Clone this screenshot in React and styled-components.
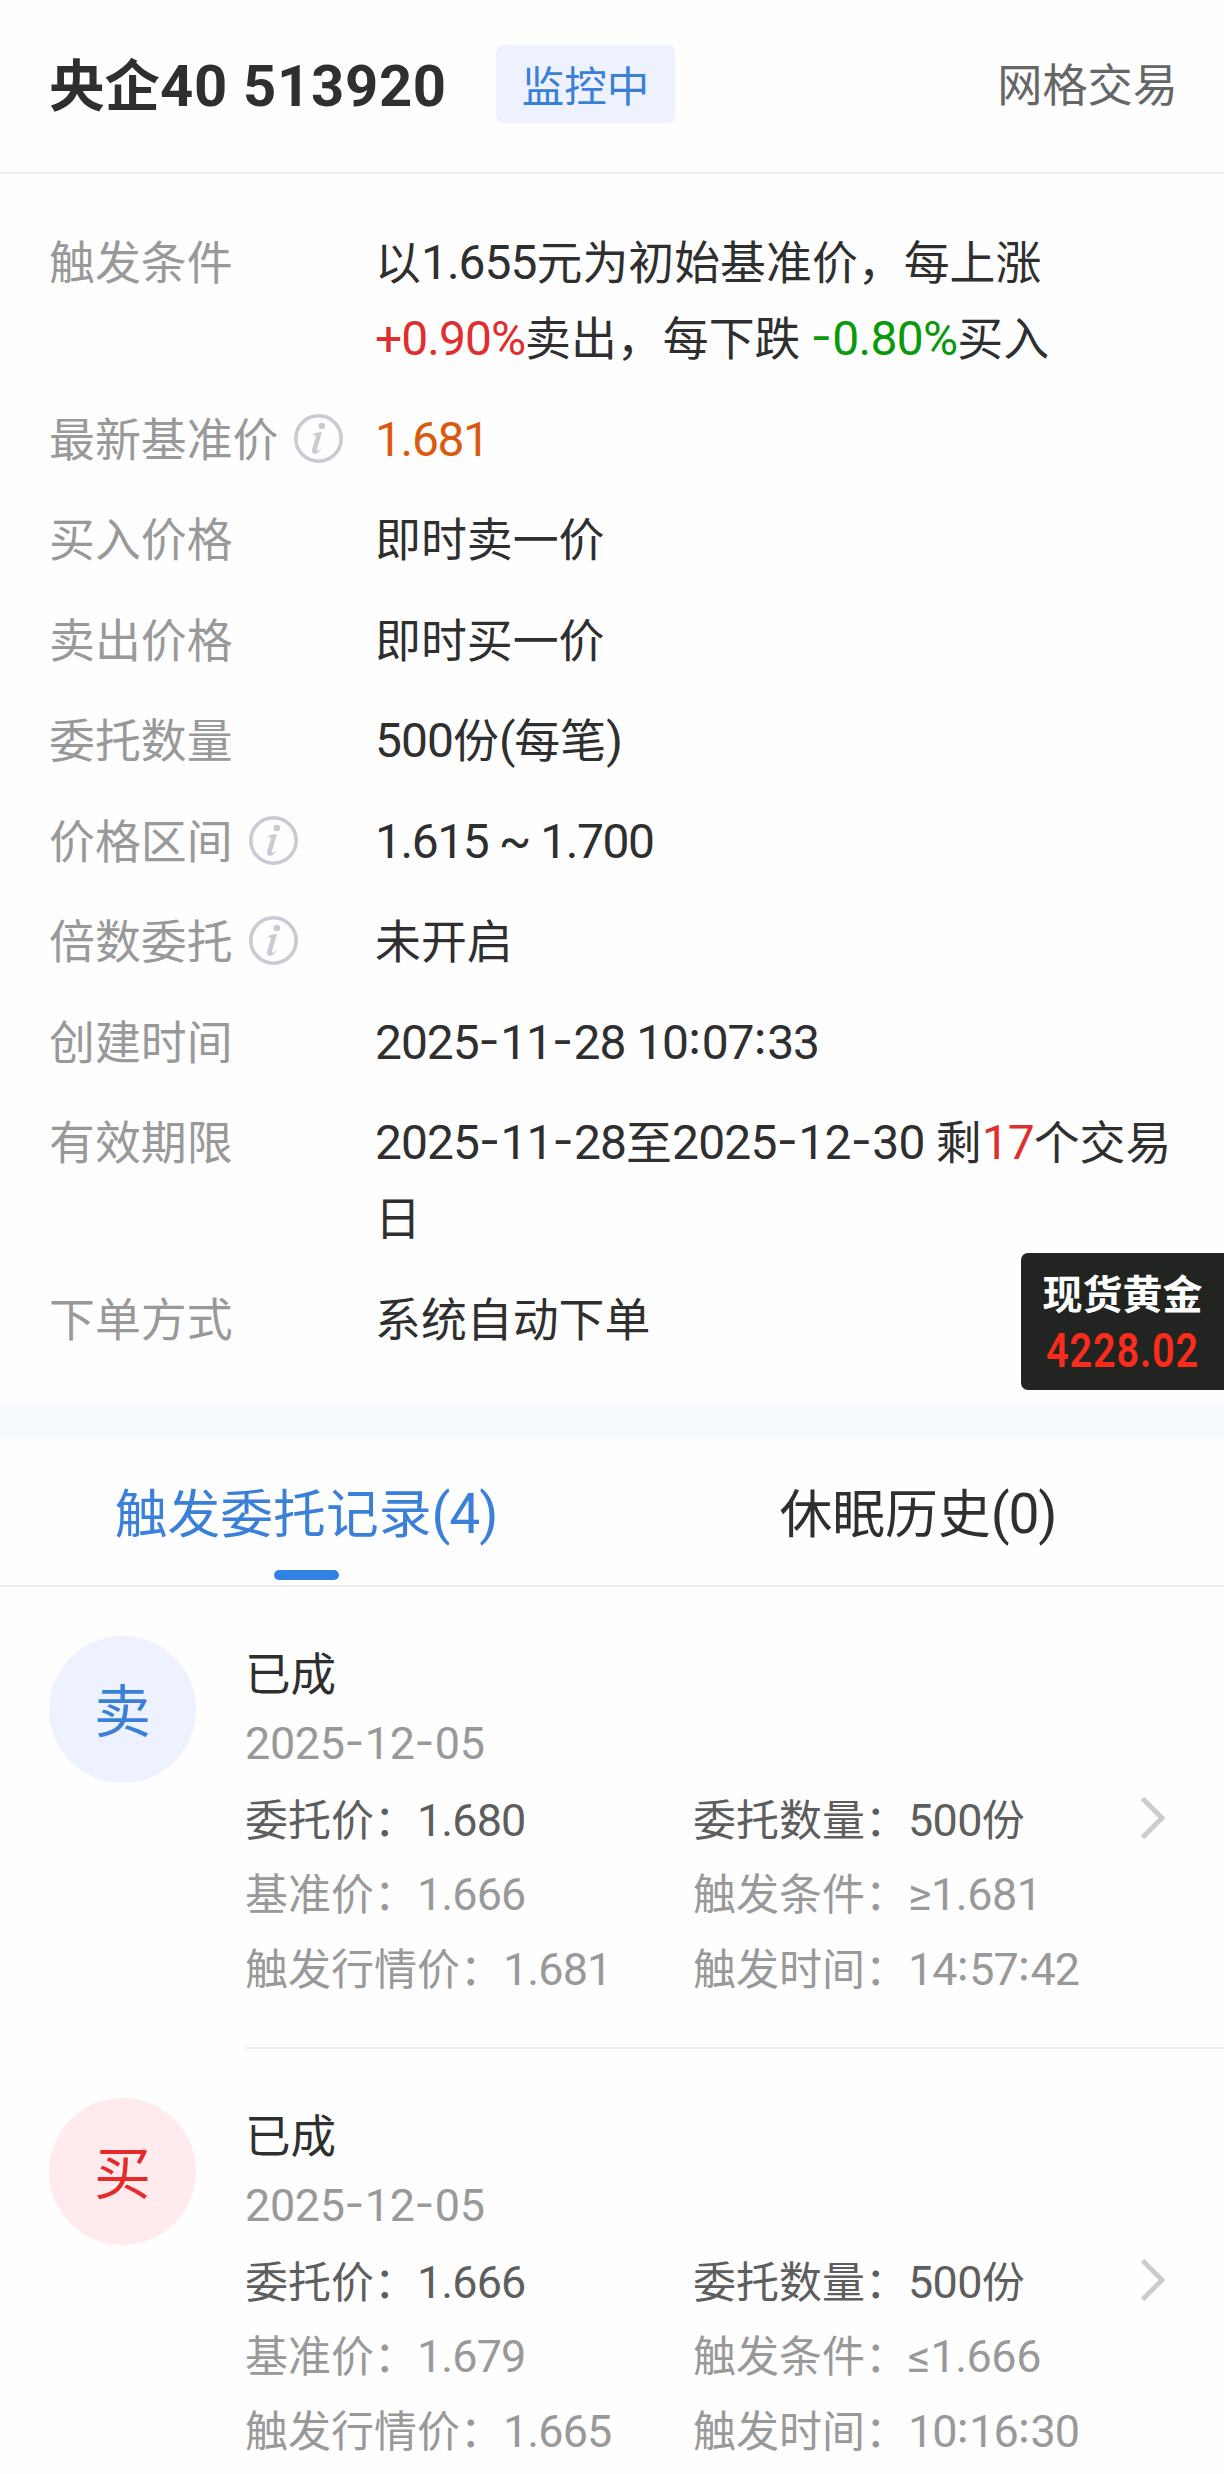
import React from 'react';
import styled, { createGlobalStyle } from 'styled-components';

const CJK = '"Noto Sans CJK SC", sans-serif';

const GlobalStyle = createGlobalStyle`
  * { box-sizing: border-box; }
  body {
    margin: 0;
    background: #fefefe;
    color: #2f2f2f;
    font-family: ${CJK};
    overflow-x: hidden;
  }
`;

const Page = styled.main`
  position: relative;
  width: 1224px;
  height: 2474px;
  overflow: hidden;
  background: #fefefe;
`;

const Header = styled.header`
  display: flex;
  align-items: center;
  height: 174px;
  padding: 0 46px 4px 49px;
  border-bottom: 2px solid #eeeeee;
`;

const Title = styled.h1`
  margin: 0;
  padding-bottom: 4px;
  width: 399px;
  font-size: 55.5px;
  line-height: 80px;
  font-weight: 700;
  white-space: pre;
`;

const Status = styled.span`
  display: flex;
  align-items: center;
  justify-content: center;
  width: 179px;
  height: 78px;
  margin-left: 48px;
  border-radius: 7px;
  background: #edf2fe;
  color: #3a80d8;
  font-size: 42.5px;
  line-height: 74px;
`;

const Kind = styled.span`
  margin-left: auto;
  padding-bottom: 3px;
  color: #666;
  font-size: 45.2px;
  line-height: 76px;
`;

const Info = styled.section`
  display: flex;
  flex-direction: column;
  gap: 24.5px;
  padding: 47px 40px 51px 49px;
  font-size: 45.9px;
  line-height: 76px;
`;

const InfoRow = styled.div`
  display: grid;
  grid-template-columns: 326px 1fr;
`;

const Label = styled.div`
  display: flex;
  gap: 16px;
  height: 76px;
  color: #999;
`;

const Value = styled.div`
  color: ${(p) => p.$color || '#2f2f2f'};
  white-space: nowrap;
`;

const Tint = styled.span`
  color: ${(p) => p.$color};
`;

const Latin = styled.span`
  font-family: Roboto, sans-serif;
  font-size: 1.045em;
  line-height: 0;
  letter-spacing: ${(p) => p.$track ?? -0.02}em;
`;

const Mark = styled.span`
  font-family: Inter, sans-serif;
  font-size: 0.957em;
  font-feature-settings: 'case' 1;
  letter-spacing: 0.01em;
`;

const InfoGlyph = styled.svg`
  width: 49px;
  height: 49px;
  margin-top: 16px;
  fill: none;
  stroke: #c9cad3;
`;

const Divider = styled.div`
  height: 34px;
  background: #f6faff;
`;

const Tabs = styled.nav`
  display: grid;
  grid-template-columns: 1fr 1fr;
  height: 148px;
  border-bottom: 2px solid #eeeeee;
`;

const Tab = styled.div`
  display: flex;
  flex-direction: column;
  align-items: center;
  padding-top: 33px;
  color: ${(p) => (p.$active ? '#3a80d8' : '#2f2f2f')};
  font-size: 52.8px;
  line-height: 76px;
`;

const Underline = styled.div`
  width: 65px;
  height: 10px;
  margin-top: 22px;
  border-radius: 5px;
  background: #3380e5;
`;

const Record = styled.article`
  display: flex;
  height: 462px;
  padding-left: 49px;
`;

const Avatar = styled.div`
  width: 147px;
  height: 147px;
  margin: 49px 49px 0 0;
  border-radius: 50%;
  background: ${(p) => (p.$buy ? '#ffeaed' : '#edf2fe')};
  color: ${(p) => (p.$buy ? '#e62a2a' : '#3a80d8')};
  font-size: 57px;
  line-height: 143px;
  text-align: center;
`;

const RecordBody = styled.div`
  flex: 1;
  padding-top: 49px;
  border-bottom: 2px solid #efefef;
`;

const State = styled.div`
  font-size: 45.5px;
  line-height: 70px;
`;

const DateLine = styled.div`
  color: #999;
  font-size: 43px;
  line-height: 68px;
  margin-bottom: 6px;
`;

const Details = styled.div`
  display: flex;
  align-items: flex-start;
`;

const Grid = styled.div`
  display: grid;
  grid-template-columns: 448px 420px;
  grid-auto-rows: 74.5px;
  align-items: center;
  font-size: 43px;
  line-height: 74px;
  white-space: nowrap;
`;

const Cell = styled.div`
  color: ${(p) => (p.$strong ? '#5e5e5e' : '#999')};
`;

const Chevron = styled.svg`
  width: 28px;
  height: 44px;
  margin: 16px 0 0 27px;
  fill: none;
  stroke: #cdcdcd;
  stroke-width: 5;
`;

const Ticker = styled.aside`
  position: absolute;
  right: 0;
  top: 1253px;
  width: 203px;
  height: 137px;
  padding-top: 12px;
  border-radius: 7px 0 0 7px;
  background: #222422;
  text-align: center;
`;

const TickerName = styled.div`
  color: #fff;
  font-size: 40px;
  font-weight: 700;
  line-height: 54px;
`;

const TickerPrice = styled.div`
  padding-top: 2px;
  color: #fb2c1c;
  font-family: Roboto, sans-serif;
  font-size: 49px;
  font-weight: 600;
  line-height: 60px;
  letter-spacing: 1px;
  white-space: nowrap;
  transform: scaleX(0.81);
`;

function Num({ children, track }) {
  return (
    <Latin $track={track}>
      {children.split(/([-:])/).map((part, i) =>
        part === '-' || part === ':' ? <Mark key={i}>{part}</Mark> : part
      )}
    </Latin>
  );
}

function InfoIcon() {
  return (
    <InfoGlyph viewBox="0 0 49 49">
      <circle cx="24.5" cy="24.5" r="22.7" strokeWidth="3.6" />
      <circle cx="27.8" cy="12" r="3.3" fill="#c9cad3" stroke="none" />
      <path
        d="M18.2 21.8 Q20.5 18.2 24.5 18.4 L28 18 L23.2 34.5 Q22.6 37.5 24.6 36.6 Q26.2 35.6 27.6 33.6 Q25.4 39.6 21 39.9 Q17 39.8 18.4 34.6 L21.8 23.2 Q22.2 21 20.6 21.2 Z"
        fill="#c9cad3"
        stroke="none"
      />
    </InfoGlyph>
  );
}

const infoRows = [
  {
    label: '触发条件',
    value: (
      <>
        以<Num>1.655</Num>元为初始基准价，每上涨
        <br />
        <Tint $color="#e02e2e"><Num>+0.90%</Num></Tint>卖出，每下跌 <Tint $color="#0a990a"><Num track={-0.015}>-0.80%</Num></Tint>买入
      </>
    ),
  },
  { label: '最新基准价', info: true, color: '#dc5a10', value: <Num track={-0.028}>1.681</Num> },
  { label: '买入价格', value: '即时卖一价' },
  { label: '卖出价格', value: '即时买一价' },
  { label: '委托数量', value: <><Num>500</Num>份<Num>(</Num>每笔<Num>)</Num></> },
  { label: '价格区间', info: true, value: <Num track={-0.03}>1.615 ~ 1.700</Num> },
  { label: '倍数委托', info: true, value: '未开启' },
  { label: '创建时间', value: <Num track={-0.022}>2025-11-28 10:07:33</Num> },
  {
    label: '有效期限',
    value: (
      <>
        <Num>2025-11-28</Num>至<Num track={-0.016}>2025-12-30 </Num>剩<Tint $color="#e02e2e"><Num>17</Num></Tint>个交易
        <br />日
      </>
    ),
  },
  { label: '下单方式', value: '系统自动下单' },
];

const records = [
  { side: '卖', price: '1.680', base: '1.666', cond: '≥1.681', market: '1.681', time: '14:57:42' },
  { side: '买', price: '1.666', base: '1.679', cond: '≤1.666', market: '1.665', time: '10:16:30' },
];

export default function App() {
  return (
    <Page lang="zh-CN">
      <GlobalStyle />
      <Header>
        <Title>央企<Num track={0.012}>40 513920</Num></Title>
        <Status>监控中</Status>
        <Kind>网格交易</Kind>
      </Header>
      <Info>
        {infoRows.map((row) => (
          <InfoRow key={row.label}>
            <Label>
              <span>{row.label}</span>
              {row.info && <InfoIcon />}
            </Label>
            <Value $color={row.color}>{row.value}</Value>
          </InfoRow>
        ))}
      </Info>
      <Divider />
      <Tabs>
        <Tab $active>
          <span>触发委托记录<Num>(4)</Num></span>
          <Underline />
        </Tab>
        <Tab>
          <span>休眠历史<Num>(0)</Num></span>
        </Tab>
      </Tabs>
      {records.map((r) => (
        <Record key={r.side}>
          <Avatar $buy={r.side === '买'}>{r.side}</Avatar>
          <RecordBody>
            <State>已成</State>
            <DateLine><Num track={-0.008}>2025-12-05</Num></DateLine>
            <Details>
              <Grid>
                <Cell $strong>委托价：<Num>{r.price}</Num></Cell>
                <Cell $strong>委托数量：<Num track={-0.014}>500</Num>份</Cell>
                <Cell>基准价：<Num>{r.base}</Num></Cell>
                <Cell>触发条件：<Num track={-0.01}>{r.cond}</Num></Cell>
                <Cell>触发行情价：<Num>{r.market}</Num></Cell>
                <Cell>触发时间：<Num track={-0.023}>{r.time}</Num></Cell>
              </Grid>
              <Chevron viewBox="0 0 28 44">
                <path d="M2.5 2.5 L22 22 L2.5 41.5" />
              </Chevron>
            </Details>
          </RecordBody>
        </Record>
      ))}
      <Ticker>
        <TickerName>现货黄金</TickerName>
        <TickerPrice>4228.02</TickerPrice>
      </Ticker>
    </Page>
  );
}
